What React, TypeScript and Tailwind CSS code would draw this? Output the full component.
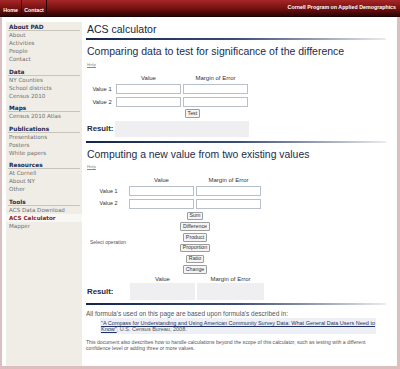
const sideNav = [
  { title: "About PAD", items: ["About", "Activities", "People", "Contact"] },
  { title: "Data", items: ["NY Counties", "School districts", "Census 2010"] },
  { title: "Maps", items: ["Census 2010 Atlas"] },
  { title: "Publications", items: ["Presentations", "Posters", "White papers"] },
  { title: "Resources", items: ["At Cornell", "About NY", "Other"] },
  { title: "Tools", items: ["ACS Data Download", "ACS Calculator", "Mapper"] },
];

const operations = ["Sum", "Difference", "Product", "Proportion", "Ratio", "Change"];

function Rule() {
  return <div className="h-[2px] w-[300px] bg-gradient-to-r from-[#13254a] via-[#3c4d70] to-[#ececee]" />;
}

function Field() {
  return <input type="text" className="h-[10px] w-[65px] border border-[#b7bfcb] bg-white" />;
}

function OpButton({ label }: { label: string }) {
  return (
    <button className="h-[8.5px] px-[1.5px] border border-[#9c9c9c] rounded-[1px] bg-[#f4f4f4] text-[5.3px] leading-none text-[#333]">
      {label}
    </button>
  );
}

function Sidebar() {
  return (
    <aside className="w-[76px] ml-[4px] pt-px pb-[4px] bg-[#efede6] font-['DejaVu_Sans',Verdana,sans-serif]">
      {sideNav.map((group, i) => (
        <div key={group.title} className={i === 0 ? "" : "mt-[4.5px]"}>
          <div className="h-[8px] mx-[2px] pl-px leading-[8px] text-[5.8px] font-bold text-[#1d2b4c] border-b border-[#c9c4b8]">
            {group.title}
          </div>
          {group.items.map((item) =>
            item === "ACS Calculator" ? (
              <div key={item} className="h-[8px] pl-[3px] leading-[8px] text-[5.6px] font-bold text-[#8f1a1a] bg-[#f8f7f3]">
                {item}
              </div>
            ) : (
              <div key={item} className="h-[8px] pl-[3px] leading-[8px] text-[5.6px] text-[#707070]">
                {item}
              </div>
            )
          )}
        </div>
      ))}
    </aside>
  );
}

export default function App() {
  return (
    <div className="w-[400px] h-[369px] overflow-hidden bg-white font-['Liberation_Sans',Arial,sans-serif]">
      <header className="h-[17px] flex justify-between bg-gradient-to-b from-[#a52626] via-[#7a1212] to-[#2e0404] border-b border-[#1c0202]">
        <nav className="flex text-white font-bold text-[5.3px]">
          <span className="w-[22px] pt-[7px] text-center border-r border-[#2a0303]">Home</span>
          <span className="w-[25px] pt-[7px] text-center border-r border-[#2a0303]">Contact</span>
        </nav>
        <span className="pt-[4px] pr-[4px] text-white font-bold text-[5.3px]">
          Cornell Program on Applied Demographics
        </span>
      </header>

      <div className="h-[352px] flex pt-[5px] border-l-2 border-r-[3px] border-b-[3px] border-[#dbbfbf]">
        <Sidebar />

        <main className="flex-1 ml-[4px] text-[#333]">
          <h1 className="mt-px h-[12px] pl-px leading-[12px] text-[10.5px] text-[#16233d]">ACS calculator</h1>
          <div className="mt-[3px]"><Rule /></div>

          {/* test for significance */}
          <h2 className="mt-[5px] h-[12px] pl-px leading-[12px] text-[10.5px] text-[#1b2c4a]">
            Comparing data to test for significance of the difference
          </h2>
          <div className="mt-[5px] h-[6px] pl-px leading-[6px] text-[4.4px] text-[#8a8a8a] underline">Help</div>

          <div className="ml-[4px] mt-[7px] grid grid-cols-[24px_65px_65px] gap-x-[2px] gap-y-[3px] items-center text-[6px]">
            <span />
            <span className="h-[6px] leading-[6px] text-center">Value</span>
            <span className="h-[6px] leading-[6px] text-center">Margin of Error</span>
            <span className="text-[5.8px] text-center">Value 1</span>
            <Field />
            <Field />
            <span className="text-[5.8px] text-center">Value 2</span>
            <Field />
            <Field />
          </div>
          <div className="mt-[2px] ml-[99px] flex">
            <OpButton label="Test" />
          </div>
          <div className="mt-[3px] flex items-center">
            <span className="w-[29px] pl-px text-[7.8px] font-bold text-[#1e2a40]">Result:</span>
            <div className="h-[16px] w-[134px] bg-[#efeff1]" />
          </div>

          <div className="mt-[4px]"><Rule /></div>

          {/* computing new values */}
          <h2 className="mt-[6px] h-[12px] pl-px leading-[12px] text-[10.4px] text-[#1b2c4a]">
            Computing a new value from two existing values
          </h2>
          <div className="mt-[3px] h-[6px] pl-px leading-[6px] text-[4.4px] text-[#8a8a8a] underline">Help</div>

          <div className="ml-[4px] mt-[7px] grid grid-cols-[37px_65px_65px] gap-x-[2px] gap-y-[3px] items-center text-[6px]">
            <span />
            <span className="h-[6px] leading-[6px] text-center">Value</span>
            <span className="h-[6px] leading-[6px] text-center">Margin of Error</span>
            <span className="mt-px text-[5.4px] text-center">Value 1</span>
            <Field />
            <Field />
            <span className="text-[5.4px] text-center">Value 2</span>
            <Field />
            <Field />
            <span className="whitespace-nowrap text-[5px] text-[#555]">Select operation</span>
            <div className="col-span-2 flex flex-col items-center gap-[2.3px]">
              {operations.map((op) => (
                <OpButton key={op} label={op} />
              ))}
            </div>
          </div>

          <div className="mt-[2.5px] grid grid-cols-[42px_65px_67px] gap-x-[2px] items-center text-[6px]">
            <span />
            <span className="h-[6px] leading-[6px] text-center">Value</span>
            <span className="h-[6px] leading-[6px] text-center">Margin of Error</span>
            <span className="pl-px text-[7.8px] font-bold text-[#1e2a40]">Result:</span>
            <div className="mt-px h-[17px] bg-[#efeff1]" />
            <div className="mt-px h-[17px] bg-[#efeff1]" />
          </div>

          <div className="mt-[3px]"><Rule /></div>

          <p className="mt-[5px] h-[7px] leading-[7px] text-[6.5px] text-[#555]">
            All formula's used on this page are based upon formula's described in:
          </p>
          <div className="mt-px ml-[14px] w-[276px] px-px py-[1.5px] bg-[#eef0f5] leading-[6.5px] text-[5.5px] text-[#555]">
            <div className="whitespace-nowrap">
              <a className="text-[#1f3266] underline">
                "A Compass for Understanding and Using American Community Survey Data: What General Data Users Need to
              </a>
            </div>
            <div>
              <a className="text-[#1f3266] underline">Know"</a>, U.S. Census Bureau, 2008.
            </div>
          </div>
          <p className="mt-[4.5px] pr-[6px] leading-[6.5px] text-[5.1px] text-[#555]">
            This document also describes how to handle calculations beyond the scope of this calculator, such as testing with a
            different confidence level or adding three or more values.
          </p>
        </main>
      </div>
    </div>
  );
}
